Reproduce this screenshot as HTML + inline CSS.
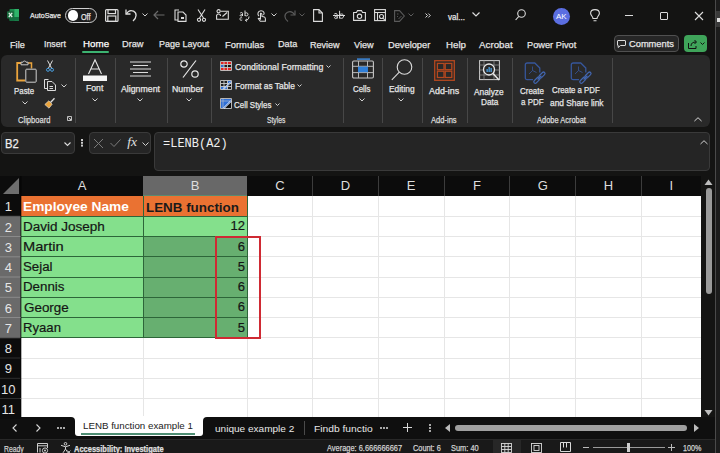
<!DOCTYPE html>
<html><head><meta charset="utf-8">
<style>
*{margin:0;padding:0;box-sizing:border-box}
html,body{width:720px;height:453px;overflow:hidden;background:#141413;font-family:"Liberation Sans",sans-serif;color:#e8e8e8}
.a{position:absolute;white-space:nowrap}
.t,.bl,.lbl{-webkit-text-stroke:0.25px currentColor}
svg{position:absolute;overflow:visible}
#win{position:absolute;left:0;top:0;width:715px;height:453px;background:#141413;border-top-right-radius:6px;overflow:hidden}
#strip{position:absolute;left:715px;top:0;width:5px;height:453px;background:#1c1c1c;border-left:1px solid #4a4a4a}
.t{font-size:10px;color:#e6e6e6}
.rib{position:absolute;left:1px;top:55px;width:709px;height:72px;background:#292929;border-radius:6px}
.sep{position:absolute;width:1px;background:#474747;top:58px;height:65px}
.lbl{font-size:8.2px;color:#dcdcdc}
.bl{font-size:9.2px;color:#e6e6e6}
.chev{position:absolute}
.box{position:absolute;background:#252525;border:1px solid #3a3a3a;border-radius:4px}
.hdr{position:absolute;top:176px;height:20px;background:#0c0c0c;color:#dedede;font-size:13px;text-align:center;line-height:20px}
.rh{position:absolute;left:0;width:21px;background:#0c0c0c;color:#e6e6e6;font-size:13px;overflow:hidden}
.cell{position:absolute;font-size:13px;color:#151515;line-height:20px;-webkit-text-stroke:0.2px currentColor}
</style></head><body>
<div id="win">
<!-- TITLE BAR -->
<svg style="left:6.5px;top:9.3px" width="12" height="12" viewBox="0 0 12 12">
 <rect x="2.5" y="0" width="9.5" height="11.7" rx="0.8" fill="#1b8a4c"/>
 <rect x="7.5" y="0" width="4.5" height="11.7" fill="#2fb36a"/>
 <rect x="2.5" y="8" width="9.5" height="3.7" fill="#137040"/>
 <rect x="0" y="2.2" width="7" height="7.3" rx="0.8" fill="#1a6b3e"/>
 <path d="M1.8 3.8 L5.2 8 M5.2 3.8 L1.8 8" stroke="#e8f5ec" stroke-width="1.2"/>
</svg>
<div class="a t" id="f0" style="left:29.77px;top:11.40px;font-size:7.61px;transform:scaleX(0.936);transform-origin:0 0">AutoSave</div>
<div class="a" style="left:65.3px;top:7.8px;width:31.7px;height:15.2px;border:1.2px solid #d0d0d0;border-radius:8px;background:#1d1d1d"></div>
<div class="a" style="left:67.8px;top:10.1px;width:10.5px;height:10.5px;background:#fff;border-radius:50%"></div>
<div class="a t" id="f1" style="left:81.40px;top:11.70px;font-size:8.6px;transform:scaleX(0.837);transform-origin:0 0">Off</div>
<!-- save -->
<svg style="left:105px;top:9px" width="14" height="13" viewBox="0 0 14 13" fill="none" stroke="#dcdcdc" stroke-width="1.2">
 <rect x="0.6" y="0.6" width="12.4" height="11.8" rx="1"/><rect x="3" y="0.6" width="7.5" height="4"/><rect x="2.8" y="7" width="8" height="5.4"/>
</svg>
<!-- undo -->
<svg style="left:125px;top:8px" width="14" height="14" viewBox="0 0 14 14" fill="none" stroke="#dcdcdc" stroke-width="1.3">
 <path d="M1 1.5 V6 H5.5"/><path d="M1.3 6 C3 3 6 2 8.5 3.2 C12 5 12 9.5 8 13"/>
</svg>
<svg style="left:142px;top:13px" width="6" height="4" viewBox="0 0 6 4" fill="none" stroke="#cfcfcf" stroke-width="1"><path d="M0.5 0.5 L3 3 L5.5 0.5"/></svg>
<!-- back arrow gray -->
<svg style="left:153px;top:10px" width="12" height="10" viewBox="0 0 12 10" fill="none" stroke="#6a6a6a" stroke-width="1.2"><path d="M11.5 5 H1 M5 1 L1 5 L5 9"/></svg>
<!-- copy icon -->
<svg style="left:174px;top:9px" width="13" height="13" viewBox="0 0 13 13" fill="none" stroke="#dcdcdc" stroke-width="1.1"><path d="M5 1 H1 V11 H4"/><path d="M4 3 H9 L12 6 V12.4 H4 Z"/><rect x="7" y="8" width="3" height="2" fill="#dcdcdc" stroke="none"/></svg>
<!-- scissors -->
<svg style="left:197px;top:9px" width="9" height="13" viewBox="0 0 9 13" fill="none" stroke="#dcdcdc" stroke-width="1.1"><path d="M1 0.5 L6.5 9 M8 0.5 L2.5 9"/><circle cx="2" cy="10.8" r="1.6"/><circle cx="7" cy="10.8" r="1.6"/></svg>
<!-- icon 4 -->
<svg style="left:215.5px;top:9px" width="13" height="11" viewBox="0 0 13 11" fill="none" stroke="#dcdcdc" stroke-width="1.1"><path d="M4.5 2.3 H12.3 V10.3 H0.6 V6"/><path d="M6.5 7.5 L11 3.5"/><circle cx="2.6" cy="2.2" r="1.6" fill="#141413"/><path d="M0.8 6.2 C0.8 4.5 4.4 4.5 4.4 6.2 V7" /></svg>
<!-- icon 5 -->
<svg style="left:238.5px;top:10px" width="11" height="11" viewBox="0 0 11 11" fill="none" stroke="#dcdcdc" stroke-width="1"><path d="M1.2 3.2 C1.8 2.2 3.5 2.2 3.5 3.5 V6 M3.5 4.4 C1 4.2 0.6 6.2 2.2 6.1 C3 6 3.5 5.5 3.5 5"/><path d="M6 0.5 V6 M6 3.5 C6.5 2.5 9 2.5 9 4.3 C9 6.3 6.5 6.3 6 5.2"/><path d="M3.2 8 C2 7.3 0.8 8 0.8 9 C0.8 10 2 10.6 3.2 10"/><path d="M10 6.5 C10 9 8.5 10.3 6.5 10.3 M8 8.8 L6.3 10.3 L8 11.5"/></svg>
<!-- icon 6 touch -->
<svg style="left:256.5px;top:9.5px" width="9" height="12" viewBox="0 0 9 12" fill="none" stroke="#dcdcdc" stroke-width="1.05"><path d="M2 6 C0.2 4.6 0.5 0.7 4 0.7 C7 0.7 7.8 3.5 6.5 5"/><path d="M3.5 3 C5 3 5 4.5 5 5 V6.5 C7.5 6.5 8.4 7.3 8.4 9 V11.3 H3.3 L1.2 8.5 C1.5 8 2.3 8 3.5 9 V3"/></svg>
<svg style="left:271px;top:13px" width="6" height="4" viewBox="0 0 6 4" fill="none" stroke="#cfcfcf" stroke-width="1"><path d="M0.5 0.5 L3 3 L5.5 0.5"/></svg>
<!-- redo gray -->
<svg style="left:284px;top:9px" width="12" height="13" viewBox="0 0 12 13" fill="none" stroke="#5a5a5a" stroke-width="1.2"><path d="M11 1.5 V6 H6.5"/><path d="M10.7 6 C9 3 6 2 3.5 3.2 C0 5 0 9.5 4 12.5"/></svg>
<svg style="left:299px;top:13px" width="6" height="4" viewBox="0 0 6 4" fill="none" stroke="#5a5a5a" stroke-width="1"><path d="M0.5 0.5 L3 3 L5.5 0.5"/></svg>
<!-- page -->
<svg style="left:313px;top:9px" width="10" height="13" viewBox="0 0 10 13" fill="none" stroke="#dcdcdc" stroke-width="1.1"><path d="M0.6 0.6 H6 L9.4 4 V12.4 H0.6 Z M6 0.6 V4 H9.4"/></svg>
<!-- strike ab -->
<svg style="left:333px;top:10px" width="12" height="10" viewBox="0 0 12 10" fill="none" stroke="#dcdcdc" stroke-width="1"><path d="M0 5.5 H12"/><path d="M1.2 4.2 C1.8 3.2 4.2 3.2 4.2 4.6 V8.6 M4.2 5.8 C1.5 5.6 0.8 8.6 2.6 8.6 C3.6 8.6 4.2 7.8 4.2 7.2"/><path d="M6.6 0.8 V8.6 M6.6 5 C7.2 3.6 10.6 3.4 10.6 6 C10.6 8.8 7.2 8.8 6.6 7.4"/></svg>
<!-- camera -->
<svg style="left:353px;top:10px" width="13" height="11" viewBox="0 0 13 11" fill="none" stroke="#dcdcdc" stroke-width="1.1"><path d="M0.6 2.5 H3.5 L4.5 0.6 H8.5 L9.5 2.5 H12.4 V10.4 H0.6 Z"/><circle cx="6.5" cy="6.3" r="2.2"/></svg>
<!-- icon -->
<svg style="left:374px;top:9px" width="12" height="13" viewBox="0 0 12 13" fill="none" stroke="#dcdcdc" stroke-width="1.1"><rect x="0.6" y="0.6" width="10.8" height="11" /><path d="M0.6 3.5 H11.4 M3.5 3.5 V11.6"/><circle cx="7.5" cy="7.5" r="2"/><path d="M9 9 L11.5 12"/></svg>
<!-- gray icon -->
<svg style="left:393.5px;top:9.5px" width="11" height="12" viewBox="0 0 11 12" fill="none" stroke="#5a5a5a" stroke-width="1.1"><path d="M0.6 0.6 H5.5 L10.3 6 L5.5 11.4 H0.6 Z"/><path d="M3 4 H4.5 M3 7 L4 6 M4.5 9 L7.5 6" stroke-width="0.9"/></svg>
<svg style="left:408px;top:13px" width="6" height="4" viewBox="0 0 6 4" fill="none" stroke="#5e5e5e" stroke-width="1"><path d="M0.5 0.5 L3 3 L5.5 0.5"/></svg>
<svg style="left:425px;top:13px" width="6" height="5" viewBox="0 0 6 5" fill="none" stroke="#d8d8d8" stroke-width="1"><path d="M0.5 0.5 L2.5 2.5 L0.5 4.5 M3.3 0.5 L5.3 2.5 L3.3 4.5"/></svg>
<div class="a t" id="f2" style="left:448.30px;top:12.20px;font-size:9.32px;transform:scaleX(0.862);transform-origin:0 0">val...</div>
<svg style="left:472px;top:12px" width="8" height="5" viewBox="0 0 8 5" fill="none" stroke="#dcdcdc" stroke-width="1.2"><path d="M0.5 0.5 L4 4 L7.5 0.5"/></svg>
<!-- search -->
<svg style="left:515px;top:9px" width="11" height="12" viewBox="0 0 11 12" fill="none" stroke="#dcdcdc" stroke-width="1.1"><circle cx="6.5" cy="4.5" r="3.8"/><path d="M3.8 7.3 L0.6 11"/></svg>
<div class="a" style="left:552.5px;top:7.5px;width:17.5px;height:17.5px;border-radius:50%;background:#5b6ee1;color:#fff;font-size:8px;text-align:center;line-height:17.5px">AK</div>
<!-- bulb -->
<svg style="left:590px;top:9px" width="10" height="13" viewBox="0 0 10 13" fill="none" stroke="#dcdcdc" stroke-width="1.1"><path d="M3 9.5 C3 7.5 0.6 6.5 0.6 4.3 C0.6 2 2.5 0.6 5 0.6 C7.5 0.6 9.4 2 9.4 4.3 C9.4 6.5 7 7.5 7 9.5 Z M3.5 11.8 H6.5"/></svg>
<div class="a" style="left:625px;top:15px;width:8px;height:1.2px;background:#dcdcdc"></div>
<div class="a" style="left:660px;top:11.5px;width:8px;height:8px;border:1.1px solid #dcdcdc;border-radius:1px"></div>
<svg style="left:695px;top:11.5px" width="8" height="8" viewBox="0 0 8 8" fill="none" stroke="#dcdcdc" stroke-width="1.1"><path d="M0 0 L8 8 M8 0 L0 8"/></svg>

<!-- MENU TABS -->
<div class="a t" id="f4" style="left:10.36px;top:38.70px;font-size:9.9px;transform:scaleX(0.929);transform-origin:0 0">File</div>
<div class="a t" id="f5" style="left:44.44px;top:37.70px;font-size:9.9px;transform:scaleX(0.884);transform-origin:0 0">Insert</div>
<div class="a t" id="f6" style="left:82.93px;top:37.70px;color:#fff;font-size:9.9px;transform:scaleX(0.990);transform-origin:0 0">Home</div>
<div class="a" style="left:82px;top:50.5px;width:27px;height:2px;background:#3cb371;border-radius:1px"></div>
<div class="a t" id="f7" style="left:122.22px;top:37.70px;font-size:9.9px;transform:scaleX(0.933);transform-origin:0 0">Draw</div>
<div class="a t" id="f8" style="left:158.58px;top:37.70px;font-size:9.9px;transform:scaleX(0.908);transform-origin:0 0">Page Layout</div>
<div class="a t" id="f9" style="left:224.56px;top:38.70px;font-size:9.9px;transform:scaleX(0.953);transform-origin:0 0">Formulas</div>
<div class="a t" id="f10" style="left:277.60px;top:38.25px;font-size:9.9px;transform:scaleX(0.922);transform-origin:0 0">Data</div>
<div class="a t" id="f11" style="left:310.28px;top:38.70px;font-size:9.9px;transform:scaleX(0.915);transform-origin:0 0">Review</div>
<div class="a t" id="f12" style="left:354.00px;top:38.70px;font-size:9.9px;transform:scaleX(0.921);transform-origin:0 0">View</div>
<div class="a t" id="f13" style="left:387.50px;top:38.70px;font-size:9.9px;transform:scaleX(0.939);transform-origin:0 0">Developer</div>
<div class="a t" id="f14" style="left:445.77px;top:38.70px;font-size:9.9px;transform:scaleX(0.983);transform-origin:0 0">Help</div>
<div class="a t" id="f15" style="left:478.85px;top:38.70px;font-size:9.9px;transform:scaleX(0.988);transform-origin:0 0">Acrobat</div>
<div class="a t" id="f16" style="left:526.50px;top:38.70px;font-size:9.9px;transform:scaleX(0.936);transform-origin:0 0">Power Pivot</div>
<div class="a" style="left:614px;top:35px;width:65px;height:17px;border:1px solid #505050;border-radius:4px;background:#262626"></div>
<svg style="left:617px;top:39.5px" width="9" height="8" viewBox="0 0 9 8" fill="none" stroke="#dcdcdc" stroke-width="1"><path d="M1 0.5 H8 Q8.5 0.5 8.5 1 V5 Q8.5 5.5 8 5.5 H3.5 L1.2 7.5 V5.5 H1 Q0.5 5.5 0.5 5 V1 Q0.5 0.5 1 0.5 Z"/></svg>
<div class="a t" id="f17" style="left:629.45px;top:37.50px;font-size:9.57px;transform:scaleX(0.972);transform-origin:0 0">Comments</div>
<div class="a" style="left:684px;top:35px;width:23px;height:17px;border-radius:4px;background:#3fa45a"></div>
<svg style="left:688px;top:38.5px" width="10" height="10" viewBox="0 0 10 10" fill="none" stroke="#111" stroke-width="1"><path d="M0.5 4 V9.5 H8 V7"/><path d="M3 7 C3 4 5 3 8 3 M6.5 1 L8.5 3 L6.5 5"/></svg>
<svg style="left:700px;top:42px" width="5" height="3" viewBox="0 0 5 3" fill="none" stroke="#111" stroke-width="1"><path d="M0.5 0.5 L2.5 2.5 L4.5 0.5"/></svg>


<!-- FORMULA BAR -->
<div class="box" style="left:1px;top:132px;width:73.5px;height:22px"></div>
<div class="a" id="f18" style="-webkit-text-stroke:0.25px currentColor;left:4.51px;top:135.80px;font-size:13.29px;color:#f0f0f0;transform:scaleX(0.846);transform-origin:0 0">B2</div>
<svg style="left:63.5px;top:142px" width="7" height="4" viewBox="0 0 7 4" fill="none" stroke="#dcdcdc" stroke-width="1.1"><path d="M0.5 0.5 L3.5 3.5 L6.5 0.5"/></svg>
<div class="a" style="left:81px;top:139px;width:1.5px;height:1.5px;background:#ccc;box-shadow:0 2.8px 0 #ccc,0 5.6px 0 #ccc"></div>
<div class="box" style="left:89px;top:132px;width:62px;height:22px"></div>
<svg style="left:93.5px;top:139px" width="9" height="9" viewBox="0 0 9 9" fill="none" stroke="#7a7a7a" stroke-width="1"><path d="M0 0 L9 9 M9 0 L0 9"/></svg>
<svg style="left:110px;top:139px" width="11" height="8" viewBox="0 0 11 8" fill="none" stroke="#7a7a7a" stroke-width="1"><path d="M0.5 4 L4 7.5 L10.5 0.5"/></svg>
<div class="a" style="left:127.3px;top:134.3px;font-family:'Liberation Serif',serif;font-style:italic;font-size:13.5px;color:#e0e0e0">fx</div>
<svg style="left:142px;top:141.5px" width="7" height="4" viewBox="0 0 7 4" fill="none" stroke="#cfcfcf" stroke-width="1"><path d="M0.5 0.5 L3.5 3.5 L6.5 0.5"/></svg>
<div class="box" style="left:153.5px;top:132px;width:556.5px;height:39px"></div>
<div class="a" id="f19" style="left:163.28px;top:136.00px;font-family:'Liberation Mono',monospace;font-size:12.88px;color:#f0f0f0;transform:scaleX(0.931);transform-origin:0 0">=LENB(A2)</div>
<svg style="left:700px;top:139.5px" width="8" height="4.5" viewBox="0 0 8 4.5" fill="none" stroke="#d0d0d0" stroke-width="1"><path d="M0.5 4 L4 0.7 L7.5 4"/></svg>

<!-- GRID -->
<div class="a" style="left:0;top:176px;width:701px;height:241px;background:#fff"></div>
<div class="hdr" style="left:0;width:21px"></div>
<svg style="left:3px;top:178px" width="16" height="16" viewBox="0 0 16 16"><path d="M16 0 V16 H0 Z" fill="#6e6e6e"/></svg>
<div class="hdr" style="left:21px;width:122px">A</div>
<div class="hdr" style="left:143px;width:104px;background:#686868;border-bottom:1px solid #5a8a70">B</div>
<div class="hdr" style="left:247px;width:66px">C</div>
<div class="hdr" style="left:313px;width:65px">D</div>
<div class="hdr" style="left:378px;width:66px">E</div>
<div class="hdr" style="left:444px;width:66px">F</div>
<div class="hdr" style="left:510px;width:65.5px">G</div>
<div class="hdr" style="left:575.5px;width:66px">H</div>
<div class="hdr" style="left:641.5px;width:59.5px">I</div>
<svg style="left:0;top:0" width="720" height="453"><rect x="312" y="176" width="1" height="20" fill="#3c3c3c"/><rect x="378" y="176" width="1" height="20" fill="#3c3c3c"/><rect x="444" y="176" width="1" height="20" fill="#3c3c3c"/><rect x="509" y="176" width="1" height="20" fill="#3c3c3c"/><rect x="575" y="176" width="1" height="20" fill="#3c3c3c"/><rect x="641" y="176" width="1" height="20" fill="#3c3c3c"/><rect x="21" y="216" width="680" height="1" fill="#e6e6e6"/><rect x="21" y="236" width="680" height="1" fill="#e6e6e6"/><rect x="21" y="256" width="680" height="1" fill="#e6e6e6"/><rect x="21" y="277" width="680" height="1" fill="#e6e6e6"/><rect x="21" y="297" width="680" height="1" fill="#e6e6e6"/><rect x="21" y="317" width="680" height="1" fill="#e6e6e6"/><rect x="21" y="337" width="680" height="1" fill="#e6e6e6"/><rect x="21" y="358" width="680" height="1" fill="#e6e6e6"/><rect x="21" y="378" width="680" height="1" fill="#e6e6e6"/><rect x="21" y="398" width="680" height="1" fill="#e6e6e6"/><rect x="143" y="196" width="1" height="221" fill="#e6e6e6"/><rect x="247" y="196" width="1" height="221" fill="#e6e6e6"/><rect x="312" y="196" width="1" height="221" fill="#e6e6e6"/><rect x="378" y="196" width="1" height="221" fill="#e6e6e6"/><rect x="444" y="196" width="1" height="221" fill="#e6e6e6"/><rect x="509" y="196" width="1" height="221" fill="#e6e6e6"/><rect x="575" y="196" width="1" height="221" fill="#e6e6e6"/><rect x="641" y="196" width="1" height="221" fill="#e6e6e6"/></svg>

<div class="a" style="left:21px;top:196px;width:226px;height:20.3px;background:#ea7232"></div>
<div class="a" style="left:21px;top:216.3px;width:226px;height:121.5px;background:#84e08c"></div>
<div class="a" style="left:143px;top:236.5px;width:104px;height:101.3px;background:#67af70"></div>
<svg style="left:0;top:0" width="720" height="453"><rect x="21" y="216" width="226" height="1" fill="#2d6639"/><rect x="21" y="236" width="226" height="1" fill="#2d6639"/><rect x="21" y="256" width="226" height="1" fill="#2d6639"/><rect x="21" y="277" width="226" height="1" fill="#2d6639"/><rect x="21" y="297" width="226" height="1" fill="#2d6639"/><rect x="21" y="317" width="226" height="1" fill="#2d6639"/><rect x="21" y="337" width="226" height="1" fill="#2d6639"/><rect x="143" y="196" width="1" height="142" fill="#2d6639"/><rect x="247" y="196" width="1" height="142" fill="#2d6639"/></svg>
<div class="cell" id="f20" style="-webkit-text-stroke:0;left:23.12px;top:197.20px;font-weight:bold;color:#fff;font-size:13.27px;transform:scaleX(1.033);transform-origin:0 0">Employee Name</div>
<div class="cell" id="f21" style="-webkit-text-stroke:0;left:145.60px;top:198.00px;font-weight:bold;color:#1a1a1a;font-size:13.27px;transform:scaleX(1.009);transform-origin:0 0">LENB function</div>
<div class="cell" id="f22" style="left:23.06px;top:216.50px;font-size:12.88px;transform:scaleX(1.049);transform-origin:0 0">David Joseph</div>
<div class="cell" style="left:143px;width:102px;text-align:right;top:216.3px">12</div>
<div class="cell" id="f23" style="left:22.7px;top:237.1px;font-size:13.1px;transform:scaleX(1.12);transform-origin:0 0">Martin</div>
<div class="cell" style="left:143px;width:102px;text-align:right;top:236.5px">6</div>
<div class="cell" id="f24" style="left:22.59px;top:256.60px;font-size:12.88px;transform:scaleX(1.032);transform-origin:0 0">Sejal</div>
<div class="cell" style="left:143px;width:102px;text-align:right;top:256.8px">5</div>
<div class="cell" id="f25" style="left:23.28px;top:277.00px;font-size:12.88px;transform:scaleX(1.034);transform-origin:0 0">Dennis</div>
<div class="cell" style="left:143px;width:102px;text-align:right;top:277px">6</div>
<div class="cell" id="f26" style="left:24.24px;top:298.10px;font-size:13.43px;transform:scaleX(0.999);transform-origin:0 0">George</div>
<div class="cell" style="left:143px;width:102px;text-align:right;top:297.3px">6</div>
<div class="cell" id="f27" style="left:22.76px;top:318.30px;font-size:13.43px;transform:scaleX(0.979);transform-origin:0 0">Ryaan</div>
<div class="cell" style="left:143px;width:102px;text-align:right;top:317.5px">5</div>
<div class="a" style="left:214.9px;top:236px;width:45.9px;height:102.5px;border:2.6px solid #cf2a33"></div>
<svg style="left:704px;top:179px" width="9" height="7" viewBox="0 0 9 7"><path d="M4.5 0.5 L8.5 6 H0.5 Z" fill="#bdbdbd"/></svg>
<div class="a" style="left:705.5px;top:188px;width:6px;height:106px;background:#9a9a9a;border-radius:3px"></div>
<svg style="left:704px;top:409px" width="9" height="7" viewBox="0 0 9 7"><path d="M4.5 6.5 L8.5 1 H0.5 Z" fill="#bdbdbd"/></svg>


<!-- SHEET TABS -->
<div class="a" style="left:0;top:416.5px;width:715px;height:22px;background:#0f0f0f"></div>
<div class="a" style="left:74.5px;top:416px;width:128px;height:20px;background:#fff;border-radius:0 0 3px 3px"></div>
<div class="a" style="left:69px;top:416px;width:140px;height:6px;background:#fff"></div>
<div class="a" style="left:69px;top:416.5px;width:6px;height:6px;background:#0f0f0f;border-top-right-radius:4px"></div>
<div class="a" style="left:202.5px;top:416.5px;width:6px;height:6px;background:#0f0f0f;border-top-left-radius:4px"></div>
<svg style="left:12px;top:423.5px" width="5" height="8" viewBox="0 0 5 8" fill="none" stroke="#d8d8d8" stroke-width="1.1"><path d="M4.5 0.5 L1 4 L4.5 7.5"/></svg>
<svg style="left:36px;top:423.5px" width="5" height="8" viewBox="0 0 5 8" fill="none" stroke="#d8d8d8" stroke-width="1.1"><path d="M0.5 0.5 L4 4 L0.5 7.5"/></svg>
<div class="a" style="left:56.5px;top:426.5px;width:2px;height:2px;border-radius:1px;background:#ddd;box-shadow:3px 0 0 #ddd,6px 0 0 #ddd"></div>

<div class="a" id="f28" style="left:83.31px;top:420.40px;font-size:9.45px;color:#222;transform:scaleX(1.032);transform-origin:0 0">LENB function example 1</div>
<div class="a" style="left:81px;top:432.5px;width:114px;height:2px;background:#4f8f74"></div>
<div class="a" id="f29" style="left:214.89px;top:422.50px;font-size:9.59px;color:#e8e8e8;transform:scaleX(1.049);transform-origin:0 0">unique example 2</div>
<div class="a" style="left:304px;top:421px;width:1px;height:14px;background:#4a4a4a"></div>
<div class="a" id="f30" style="left:314.09px;top:422.50px;font-size:9.59px;color:#e8e8e8;transform:scaleX(1.071);transform-origin:0 0">Findb functio</div>
<div class="a" style="left:380px;top:426.5px;width:2px;height:2px;border-radius:1px;background:#ddd;box-shadow:3px 0 0 #ddd,6px 0 0 #ddd"></div>
<svg style="left:403px;top:423px" width="9" height="9" viewBox="0 0 9 9" fill="none" stroke="#d8d8d8" stroke-width="1"><path d="M4.5 0 V9 M0 4.5 H9"/></svg>
<div class="a" style="left:429.3px;top:424.2px;width:2px;height:2px;border-radius:1px;background:#ddd;box-shadow:0 3px 0 #ddd,0 6px 0 #ddd"></div>
<svg style="left:445px;top:423.5px" width="5" height="8" viewBox="0 0 5 8"><path d="M5 0 V8 L0 4 Z" fill="#bdbdbd"/></svg>
<div class="a" style="left:455px;top:424.5px;width:232px;height:6px;background:#a0a0a0;border-radius:3px"></div>
<svg style="left:694px;top:423.5px" width="5" height="8" viewBox="0 0 5 8"><path d="M0 0 V8 L5 4 Z" fill="#bdbdbd"/></svg>

<!-- STATUS BAR -->
<div class="a" style="left:0;top:438.8px;width:715px;height:14.2px;background:#191919;border-top:1px solid #282828"></div>
<div class="a" id="f31" style="-webkit-text-stroke:0.25px currentColor;left:4.23px;top:443.60px;font-size:9.04px;color:#d0d0d0;transform:scaleX(0.757);transform-origin:0 0">Ready</div>
<svg style="left:37px;top:443px" width="12" height="10" viewBox="0 0 12 10" fill="none" stroke="#cfcfcf" stroke-width="1"><path d="M0.5 9.5 V0.5 H10.5 V5"/><path d="M0.5 2.8 H10.5"/><path d="M3 5 V9.5"/><circle cx="8" cy="7.5" r="2.6" fill="#191919"/><circle cx="8" cy="7.5" r="1" fill="#cfcfcf" stroke="none"/></svg>
<svg style="left:59.5px;top:442px" width="11" height="11" viewBox="0 0 11 11" fill="none" stroke="#cfcfcf" stroke-width="1"><circle cx="5.5" cy="1.8" r="1.3"/><path d="M1 3.3 L5.5 4.8 L10 3.3 M5.5 4.8 V7 L3 10.8 M5.5 7 L8 10.8"/><path d="M7.5 8.5 L10.5 11.5 M10.5 8.5 L7.5 11.5" stroke-width="0.8"/></svg>
<div class="a" id="f32" style="-webkit-text-stroke:0.25px currentColor;left:73.50px;top:444.00px;font-size:8.90px;color:#e0e0e0;font-weight:bold;transform:scaleX(0.845);transform-origin:0 0">Accessibility: Investigate</div>
<div class="a" id="f33" style="-webkit-text-stroke:0.25px currentColor;left:327.25px;top:443.40px;font-size:8.43px;color:#d0d0d0;transform:scaleX(0.883);transform-origin:0 0">Average: 6.666666667</div>
<div class="a" id="f34" style="-webkit-text-stroke:0.25px currentColor;left:412.60px;top:443.40px;font-size:8.43px;color:#d0d0d0;transform:scaleX(0.873);transform-origin:0 0">Count: 6</div>
<div class="a" id="f35" style="-webkit-text-stroke:0.25px currentColor;left:451.36px;top:443.40px;font-size:8.31px;color:#d0d0d0;transform:scaleX(0.897);transform-origin:0 0">Sum: 40</div>
<div class="a" style="left:492.5px;top:439.8px;width:28.5px;height:13.2px;background:#272727"></div>
<svg style="left:501px;top:442.5px" width="11" height="10" viewBox="0 0 11 10" fill="none" stroke="#d8d8d8" stroke-width="0.9"><rect x="0.5" y="0.5" width="10" height="9"/><path d="M3.8 0.5 V9.5 M7.2 0.5 V9.5 M0.5 3.5 H10.5 M0.5 6.5 H10.5"/></svg>
<svg style="left:531px;top:442.5px" width="11" height="10" viewBox="0 0 11 10" fill="none" stroke="#d8d8d8" stroke-width="0.9"><rect x="0.5" y="0.5" width="10" height="9"/><rect x="3" y="2.5" width="5" height="5"/></svg>
<svg style="left:560px;top:442px" width="11" height="10" viewBox="0 0 11 10" fill="none" stroke="#d8d8d8" stroke-width="1"><path d="M0.5 0.5 H10.5 V9.5 H0.5 Z"/><path d="M3.5 0.5 V5.5 M6.5 0.5 V5.5"/></svg>
<div class="a" style="left:583px;top:447px;width:6px;height:1px;background:#bbb"></div>
<div class="a" style="left:593px;top:447px;width:72px;height:1px;background:#9a9a9a"></div>
<div class="a" style="left:626.5px;top:442.5px;width:3px;height:9px;background:#cfcfcf"></div>
<svg style="left:667.5px;top:443.5px" width="7" height="7" viewBox="0 0 7 7" fill="none" stroke="#bbb" stroke-width="1"><path d="M3.5 0 V7 M0 3.5 H7"/></svg>
<div class="a" id="f36" style="-webkit-text-stroke:0.25px currentColor;left:682.89px;top:443.40px;font-size:8.43px;color:#d0d0d0;transform:scaleX(0.853);transform-origin:0 0">100%</div>

<div class="rh" style="top:196.0px;height:20.30px;background:#0c0c0c"><span style="position:absolute;left:0;width:16.5px;text-align:center;top:3.3px;line-height:16px">1</span></div>
<div class="rh" style="top:216.3px;height:20.20px;background:#6a6a6a"><span style="position:absolute;left:0;width:16.5px;text-align:center;top:3.3px;line-height:16px">2</span></div>
<div class="rh" style="top:236.5px;height:20.30px;background:#6a6a6a"><span style="position:absolute;left:0;width:16.5px;text-align:center;top:3.3px;line-height:16px">3</span></div>
<div class="rh" style="top:256.8px;height:20.20px;background:#6a6a6a"><span style="position:absolute;left:0;width:16.5px;text-align:center;top:3.3px;line-height:16px">4</span></div>
<div class="rh" style="top:277.0px;height:20.30px;background:#6a6a6a"><span style="position:absolute;left:0;width:16.5px;text-align:center;top:3.3px;line-height:16px">5</span></div>
<div class="rh" style="top:297.3px;height:20.20px;background:#6a6a6a"><span style="position:absolute;left:0;width:16.5px;text-align:center;top:3.3px;line-height:16px">6</span></div>
<div class="rh" style="top:317.5px;height:20.30px;background:#6a6a6a"><span style="position:absolute;left:0;width:16.5px;text-align:center;top:3.3px;line-height:16px">7</span></div>
<div class="rh" style="top:337.8px;height:20.20px;background:#0c0c0c"><span style="position:absolute;left:0;width:16.5px;text-align:center;top:3.3px;line-height:16px">8</span></div>
<div class="rh" style="top:358.0px;height:20.30px;background:#0c0c0c"><span style="position:absolute;left:0;width:16.5px;text-align:center;top:3.3px;line-height:16px">9</span></div>
<div class="rh" style="top:378.3px;height:20.20px;background:#0c0c0c"><span style="position:absolute;left:0;width:16.5px;text-align:center;top:3.3px;line-height:16px">10</span></div>
<div class="rh" style="top:398.5px;height:20.30px;background:#0c0c0c"><span style="position:absolute;left:0;width:16.5px;text-align:center;top:3.3px;line-height:16px">11</span></div>
<svg style="left:0;top:0" width="21" height="453"><rect x="0" y="215.8" width="20.5" height="1" fill="#555"/><rect x="0" y="236.0" width="20.5" height="1" fill="#8a8a8a"/><rect x="0" y="256.3" width="20.5" height="1" fill="#8a8a8a"/><rect x="0" y="276.5" width="20.5" height="1" fill="#8a8a8a"/><rect x="0" y="296.8" width="20.5" height="1" fill="#8a8a8a"/><rect x="0" y="317.0" width="20.5" height="1" fill="#8a8a8a"/><rect x="0" y="337.3" width="20.5" height="1" fill="#555"/><rect x="0" y="357.5" width="20.5" height="1" fill="#2e2e2e"/><rect x="0" y="377.8" width="20.5" height="1" fill="#2e2e2e"/><rect x="0" y="398.0" width="20.5" height="1" fill="#2e2e2e"/><rect x="20.5" y="176" width="0.8" height="241" fill="#000"/></svg>
<!-- RIBBON -->
<div class="rib"></div>
<!-- Clipboard -->
<svg style="left:16px;top:60px" width="21" height="23" viewBox="0 0 21 23" fill="none">
 <path d="M5 3 H1.2 V20.5 H9" stroke="#eaa43c" stroke-width="1.8"/>
 <path d="M12 3 H15.5 V8.5" stroke="#eaa43c" stroke-width="1.5"/>
 <path d="M5 2.2 H7 C7 0.6 10 0.6 10 2.2 H12 V4.8 H5 Z" stroke="#c8c8c8" stroke-width="1" fill="#292929"/>
 <rect x="9.8" y="9.2" width="10.4" height="13" stroke="#d0d0d0" stroke-width="1" fill="#2a2a2a" rx="0.8"/>
</svg>
<div class="a bl" id="f37" style="left:14.15px;top:85.90px;font-size:9.13px;transform:scaleX(0.863);transform-origin:0 0">Paste</div>
<svg style="left:22px;top:101px" width="6" height="4" viewBox="0 0 6 4" fill="none" stroke="#d0d0d0" stroke-width="1"><path d="M0.5 0.5 L3 3 L5.5 0.5"/></svg>
<svg style="left:46px;top:60px" width="8" height="12" viewBox="0 0 8 12" fill="none" stroke="#dcdcdc" stroke-width="1"><path d="M1.5 0.5 L5.5 8"/><path d="M6.5 0.5 L2.5 8"/><circle cx="2" cy="9.8" r="1.5" stroke="#4a9fe0"/><circle cx="6" cy="9.8" r="1.5" stroke="#4a9fe0"/></svg>
<svg style="left:44px;top:79px" width="12" height="12" viewBox="0 0 12 12" fill="none" stroke="#dcdcdc" stroke-width="1"><path d="M4.5 0.5 H0.5 V9.5 H3"/><path d="M3.5 2.5 H8 L11.5 6 V11.5 H3.5 Z"/><path d="M5.5 7.5 H9 M5.5 9.5 H9"/></svg>
<svg style="left:61px;top:83.5px" width="6" height="4" viewBox="0 0 6 4" fill="none" stroke="#d0d0d0" stroke-width="1"><path d="M0.5 0.5 L3 3 L5.5 0.5"/></svg>
<svg style="left:44px;top:97px" width="12" height="12" viewBox="0 0 12 12" fill="none"><path d="M6.5 5.5 L10.5 1.2" stroke="#e0e0e0" stroke-width="1.3"/><path d="M0.8 7.5 L4.8 3.8 L8.2 7.2 L5 11.2 Z" fill="#eaa43c" stroke="#e8e8e8" stroke-width="0.6"/></svg>
<div class="a lbl" id="f38" style="left:17.56px;top:115.20px;font-size:8.49px;transform:scaleX(0.892);transform-origin:0 0">Clipboard</div>
<svg style="left:67px;top:116px" width="5" height="5" viewBox="0 0 5 5" fill="none" stroke="#cfcfcf" stroke-width="0.9"><path d="M0.5 4.5 V0.5 H4.5 V4.5 Z M1.5 1.5 L4 4 M2.5 4 H4 V2.5"/></svg>
<div class="sep" style="left:75px"></div>
<!-- Font -->
<svg style="left:83px;top:59px" width="24" height="22" viewBox="0 0 24 22" fill="none"><path d="M5.5 15 L12 0.8 L18.5 15 M8 10 H16" stroke="#e8e8e8" stroke-width="1.1"/><rect x="0" y="16.5" width="24" height="5.5" fill="#f5f5f5"/></svg>
<div class="a bl" id="f39" style="left:85.90px;top:83.40px;font-size:8.99px;transform:scaleX(0.965);transform-origin:0 0">Font</div>
<svg style="left:92px;top:98px" width="6" height="4" viewBox="0 0 6 4" fill="none" stroke="#d0d0d0" stroke-width="1"><path d="M0.5 0.5 L3 3 L5.5 0.5"/></svg>
<div class="sep" style="left:114.5px"></div>
<!-- Alignment -->
<svg style="left:130px;top:61px" width="21" height="16" viewBox="0 0 21 16" fill="none" stroke="#dcdcdc" stroke-width="1.1"><path d="M0 1 H21 M3 4.5 H18 M0 8 H21 M3 11.5 H18 M0 15 H21"/></svg>
<div class="a bl" id="f40" style="left:120.75px;top:84.40px;font-size:8.36px;transform:scaleX(1.050);transform-origin:0 0">Alignment</div>
<svg style="left:137px;top:98px" width="6" height="4" viewBox="0 0 6 4" fill="none" stroke="#d0d0d0" stroke-width="1"><path d="M0.5 0.5 L3 3 L5.5 0.5"/></svg>
<div class="sep" style="left:166.5px"></div>
<!-- Number -->
<svg style="left:180px;top:60px" width="19" height="18" viewBox="0 0 19 18" fill="none" stroke="#e8e8e8" stroke-width="1.2"><circle cx="4" cy="4" r="3.2"/><circle cx="15" cy="14" r="3.2"/><path d="M16 0.5 L3 17.5"/></svg>
<div class="a bl" id="f41" style="left:172.40px;top:84.40px;font-size:8.36px;transform:scaleX(1.051);transform-origin:0 0">Number</div>
<svg style="left:186px;top:98px" width="6" height="4" viewBox="0 0 6 4" fill="none" stroke="#d0d0d0" stroke-width="1"><path d="M0.5 0.5 L3 3 L5.5 0.5"/></svg>
<div class="sep" style="left:210.5px"></div>
<!-- Styles -->
<svg style="left:220px;top:61px" width="12" height="10" viewBox="0 0 12 10" fill="none"><rect x="0" y="0" width="12" height="10" fill="#1e1e1e"/><rect x="1" y="1" width="10" height="2.5" fill="#e02424"/><rect x="1" y="7" width="10" height="2.5" fill="#e02424"/><rect x="1" y="3.5" width="3" height="3.5" fill="#2f6fd6"/><rect x="7" y="3.5" width="3" height="3.5" fill="#101010"/><path d="M0.5 0.5 H11.5 V9.5 H0.5 Z M4 0.5 V9.5 M7.5 0.5 V9.5 M0.5 3.5 H11.5 M0.5 6.5 H11.5" stroke="#c8c8c8" stroke-width="0.9"/></svg>
<div class="a bl" id="f42" style="left:234.87px;top:60.70px;font-size:9.45px;transform:scaleX(0.931);transform-origin:0 0">Conditional Formatting</div>
<svg style="left:326px;top:65px" width="5" height="3" viewBox="0 0 5 3" fill="none" stroke="#d0d0d0" stroke-width="1"><path d="M0.5 0.5 L2.5 2.5 L4.5 0.5"/></svg>
<svg style="left:220px;top:80px" width="12" height="10" viewBox="0 0 12 10" fill="none"><rect x="0" y="0" width="12" height="10" fill="#1e1e1e"/><rect x="7.5" y="0.5" width="4" height="3" fill="#2f6fd6"/><rect x="0.5" y="6.5" width="7" height="3" fill="#2f6fd6"/><path d="M0.5 0.5 H11.5 V9.5 H0.5 Z M4 0.5 V9.5 M7.5 0.5 V9.5 M0.5 3.5 H11.5 M0.5 6.5 H11.5" stroke="#c8c8c8" stroke-width="0.9"/><path d="M3 9.5 L11 2" stroke="#f0f0f0" stroke-width="1.6"/><path d="M3 9.5 L11 2" stroke="#2f6fd6" stroke-width="0.6"/></svg>
<div class="a bl" id="f43" style="left:234.97px;top:80.60px;font-size:8.90px;transform:scaleX(0.943);transform-origin:0 0">Format as Table</div>
<svg style="left:297px;top:83.5px" width="5" height="3" viewBox="0 0 5 3" fill="none" stroke="#d0d0d0" stroke-width="1"><path d="M0.5 0.5 L2.5 2.5 L4.5 0.5"/></svg>
<svg style="left:220px;top:98px" width="12" height="11" viewBox="0 0 12 11" fill="none"><rect x="0" y="0" width="12" height="11" fill="#101010"/><path d="M1 1 H11 V4 L4 10 H1 Z" fill="#2f6fd6"/><path d="M0.5 0.5 H11.5 V10.5 H0.5 Z" stroke="#c8c8c8" stroke-width="0.9"/><path d="M0.5 3 H11.5 M3 0.5 V10.5" stroke="#c8c8c8" stroke-width="0.6"/><path d="M3.5 10.5 L11 3" stroke="#f0f0f0" stroke-width="1.6"/><path d="M3.5 10.5 L11 3" stroke="#2f6fd6" stroke-width="0.6"/></svg>
<div class="a bl" id="f44" style="left:234.35px;top:99.60px;font-size:9.32px;transform:scaleX(0.851);transform-origin:0 0">Cell Styles</div>
<svg style="left:275px;top:102.5px" width="5" height="3" viewBox="0 0 5 3" fill="none" stroke="#d0d0d0" stroke-width="1"><path d="M0.5 0.5 L2.5 2.5 L4.5 0.5"/></svg>
<div class="a lbl" id="f45" style="left:266.55px;top:115.40px;font-size:8.63px;transform:scaleX(0.780);transform-origin:0 0">Styles</div>
<div class="sep" style="left:343px"></div>
<!-- Cells -->
<svg style="left:351.5px;top:58px" width="22" height="21" viewBox="0 0 22 21" fill="none"><rect x="5" y="0.4" width="13" height="1.4" fill="#3d8ee6"/><rect x="0.6" y="3" width="20.8" height="17" stroke="#c8c8c8" stroke-width="1.1" rx="1.2"/><path d="M0.6 8.3 H21.4 M0.6 14.6 H21.4 M6.5 3 V20 M15.5 3 V20" stroke="#b8b8b8" stroke-width="1"/><rect x="6" y="8.6" width="10" height="5.6" fill="#2f7fd8"/></svg>
<div class="a bl" id="f46" style="left:353.03px;top:84.40px;font-size:8.77px;transform:scaleX(0.895);transform-origin:0 0">Cells</div>
<svg style="left:359px;top:98px" width="6" height="4" viewBox="0 0 6 4" fill="none" stroke="#d0d0d0" stroke-width="1"><path d="M0.5 0.5 L3 3 L5.5 0.5"/></svg>
<div class="sep" style="left:382px"></div>
<!-- Editing -->
<svg style="left:391px;top:59px" width="22" height="22" viewBox="0 0 22 22" fill="none" stroke="#dcdcdc" stroke-width="1.1"><circle cx="13.5" cy="8" r="7.3"/><path d="M8.3 13.2 L0.8 20.8"/></svg>
<div class="a bl" id="f47" style="left:388.82px;top:84.40px;font-size:8.77px;transform:scaleX(0.955);transform-origin:0 0">Editing</div>
<svg style="left:398px;top:98px" width="6" height="4" viewBox="0 0 6 4" fill="none" stroke="#d0d0d0" stroke-width="1"><path d="M0.5 0.5 L3 3 L5.5 0.5"/></svg>
<div class="sep" style="left:421.5px"></div>
<!-- Add-ins -->
<svg style="left:433.5px;top:60px" width="21" height="21" viewBox="0 0 21 21" fill="none" stroke="#b4481f" stroke-width="1.3"><rect x="0.7" y="0.7" width="19.6" height="19.6"/><rect x="3.4" y="3.4" width="6.6" height="6.3"/><rect x="11.2" y="3.4" width="6.6" height="6.3"/><rect x="3.4" y="11.2" width="6.6" height="6.3"/><rect x="11.2" y="11.2" width="6.6" height="6.3"/></svg>
<div class="a bl" id="f48" style="left:429.00px;top:86.20px;font-size:8.63px;transform:scaleX(1.034);transform-origin:0 0">Add-ins</div>
<div class="a lbl" id="f49" style="left:430.65px;top:115.40px;font-size:8.63px;transform:scaleX(0.876);transform-origin:0 0">Add-ins</div>
<div class="sep" style="left:467px"></div>
<!-- Analyze -->
<svg style="left:479px;top:60px" width="21" height="22" viewBox="0 0 21 22" fill="none"><rect x="0.6" y="0.6" width="19.8" height="19" stroke="#cfcfcf" stroke-width="1"/><path d="M0.6 5 H20.4 M0.6 10 H20.4 M0.6 15 H20.4 M5 0.6 V19.6 M15 0.6 V19.6" stroke="#8a8a8a" stroke-width="0.8"/><circle cx="10" cy="9.5" r="5.5" stroke="#e8e8e8" stroke-width="1.3" fill="#292929"/><path d="M14 13.5 L20 20" stroke="#e8e8e8" stroke-width="1.5"/><rect x="7.5" y="9" width="1.3" height="3" fill="#4a9fe0"/><rect x="9.5" y="7" width="1.3" height="5" fill="#4a9fe0"/><rect x="11.5" y="8" width="1.3" height="4" fill="#4a9fe0"/></svg>
<div class="a bl" id="f50" style="left:474.04px;top:86.50px;font-size:8.63px;transform:scaleX(0.967);transform-origin:0 0">Analyze</div>
<div class="a bl" id="f51" style="left:480.57px;top:95.50px;font-size:9.42px;transform:scaleX(0.877);transform-origin:0 0">Data</div>
<div class="sep" style="left:511.5px"></div>
<!-- PDF -->
<svg style="left:524px;top:61.8px" width="22" height="23" viewBox="0 0 22 23" fill="none"><path d="M9 17.6 H3.3 Q1.3 17.6 1.3 15.6 V3 Q1.3 1 3.3 1 H10.8 L15.8 6 V10.5" stroke="#36569a" stroke-width="1.3" stroke-linejoin="round"/><path d="M8.5 4.5 V8.5 L5 12 M8.5 8.5 L12.5 10.5" stroke="#36569a" stroke-width="0.8"/><path d="M11.3 19.8 L14.5 16.6 M16.5 14.6 L19.5 11.6" stroke="#4266b0" stroke-width="4.2" stroke-linecap="round"/><path d="M11.3 19.8 L14.5 16.6 M16.5 14.6 L19.5 11.6" stroke="#292929" stroke-width="1.8" stroke-linecap="round"/><path d="M13.6 17.5 L17.4 13.7" stroke="#4266b0" stroke-width="1.3"/></svg>
<div class="a bl" id="f52" style="left:520.09px;top:85.50px;font-size:9.00px;transform:scaleX(0.886);transform-origin:0 0">Create</div>
<div class="a bl" id="f53" style="left:520.75px;top:95.50px;font-size:9.42px;transform:scaleX(0.845);transform-origin:0 0">a PDF</div>
<svg style="left:570px;top:61.8px" width="22" height="23" viewBox="0 0 22 23" fill="none"><path d="M9 17.6 H3.3 Q1.3 17.6 1.3 15.6 V3 Q1.3 1 3.3 1 H10.8 L15.8 6 V10.5" stroke="#36569a" stroke-width="1.3" stroke-linejoin="round"/><path d="M8.5 4.5 V8.5 L5 12 M8.5 8.5 L12.5 10.5" stroke="#36569a" stroke-width="0.8"/><path d="M11.3 19.8 L14.5 16.6 M16.5 14.6 L19.5 11.6" stroke="#4266b0" stroke-width="4.2" stroke-linecap="round"/><path d="M11.3 19.8 L14.5 16.6 M16.5 14.6 L19.5 11.6" stroke="#292929" stroke-width="1.8" stroke-linecap="round"/><path d="M13.6 17.5 L17.4 13.7" stroke="#4266b0" stroke-width="1.3"/></svg>
<div class="a bl" id="f54" style="left:552.39px;top:85.10px;font-size:9.00px;transform:scaleX(0.866);transform-origin:0 0">Create a PDF</div>
<div class="a bl" id="f55" style="left:550.04px;top:97.50px;font-size:8.90px;transform:scaleX(0.943);transform-origin:0 0">and Share link</div>
<div class="a lbl" id="f56" style="left:536.81px;top:115.40px;font-size:8.63px;transform:scaleX(0.865);transform-origin:0 0">Adobe Acrobat</div>
<div class="sep" style="left:611.5px"></div>
<svg style="left:693.5px;top:117px" width="8" height="4.5" viewBox="0 0 8 4.5" fill="none" stroke="#d8d8d8" stroke-width="1"><path d="M0.4 4.1 L4 0.7 L7.6 4.1"/></svg>
</div>
<div id="strip"></div>
<div class="a" style="left:716px;top:11px;width:4px;height:16px;background:#3a3a3a"></div>
<div class="a" style="left:717px;top:18px;width:3px;height:4px;background:#e0e0e0"></div>
</body></html>
